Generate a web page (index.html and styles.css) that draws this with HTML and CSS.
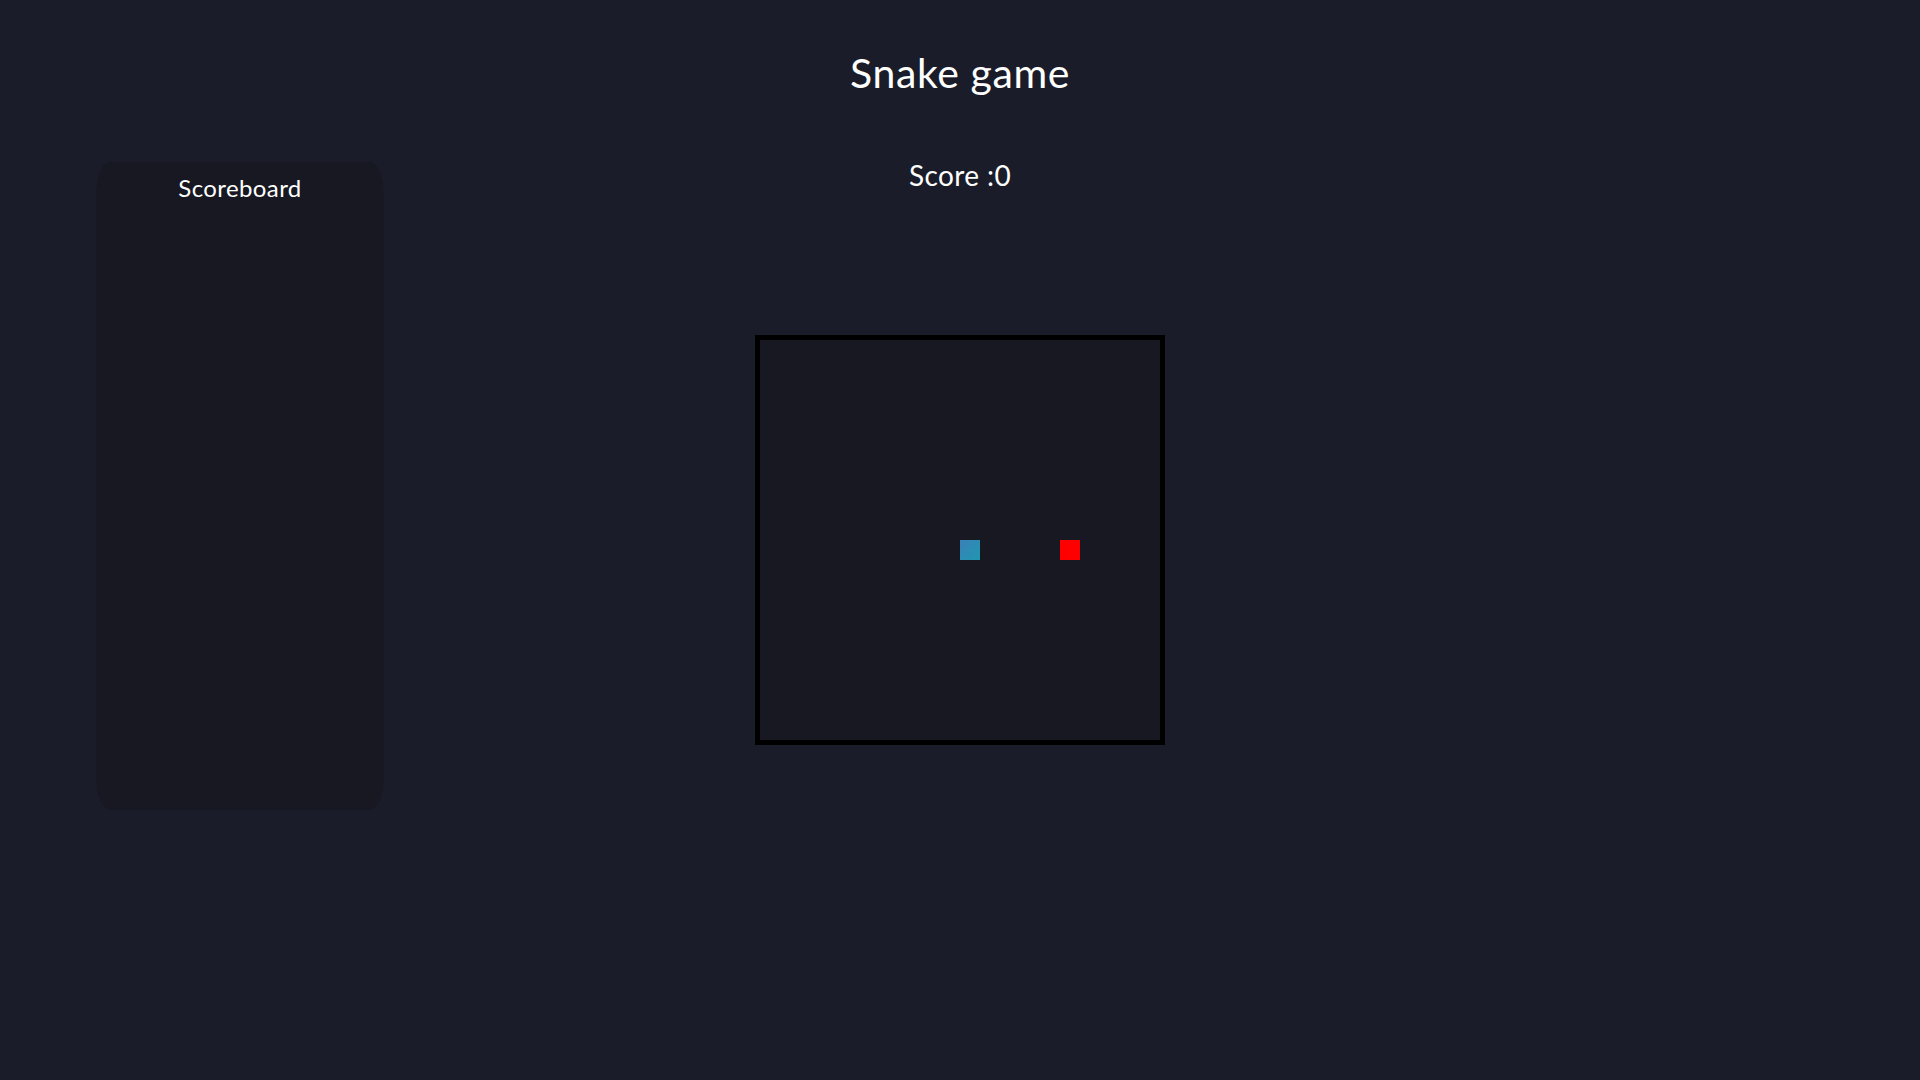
FILE: index.html
```html
<!DOCTYPE html>
<html lang="en">
<head>
<meta charset="utf-8">
<title>Snake game</title>
<link rel="stylesheet" href="styles.css">
</head>
<body>
<h1 class="title">Snake game</h1>
<main class="layout">
  <aside class="scoreboard">
    <h2 class="scoreboard-title">Scoreboard</h2>
  </aside>
  <section class="game">
    <div class="score">Score :0</div>
    <div class="board">
      <div class="cell snake" style="left:200px;top:200px"></div>
      <div class="cell food" style="left:300px;top:200px"></div>
    </div>
  </section>
  <div class="spacer"></div>
</main>
</body>
</html>
```
FILE: styles.css
```css
html, body {
  margin: 0;
  padding: 0;
}
body {
  background: #1a1d29;
  color: #ffffff;
  font-family: "Lato", "Open Sans", sans-serif;
  width: 1920px;
  height: 1080px;
  overflow: hidden;
}
.title {
  margin: 0;
  padding-top: 49px;
  font-size: 41px;
  line-height: 48px;
  letter-spacing: 0.6px;
  font-weight: 400;
  text-align: center;
}
.layout {
  display: grid;
  grid-template-columns: 1fr 410px 1fr;
  margin-top: 61px;
}
.scoreboard {
  margin-top: 4px;
  margin-left: 96px;
  width: 288px;
  height: 648px;
  border-radius: 5%;
  background: #181822;
}
.scoreboard-title {
  margin: 0;
  padding-top: 12px;
  font-size: 24px;
  line-height: 28px;
  letter-spacing: 0.4px;
  font-weight: 400;
  text-align: center;
}
.game {
  display: flex;
  flex-direction: column;
  align-items: center;
}
.score {
  font-size: 28px;
  line-height: 34px;
  letter-spacing: 0.4px;
  text-align: center;
}
.board {
  position: relative;
  margin-top: 143px;
  width: 400px;
  height: 400px;
  border: 5px solid #000000;
  background: #181822;
}
.cell {
  position: absolute;
  width: 20px;
  height: 20px;
}
.snake {
  background: linear-gradient(135deg, #3a80b8, #1f98b0);
}
.food {
  background: #ff0000;
}
```
